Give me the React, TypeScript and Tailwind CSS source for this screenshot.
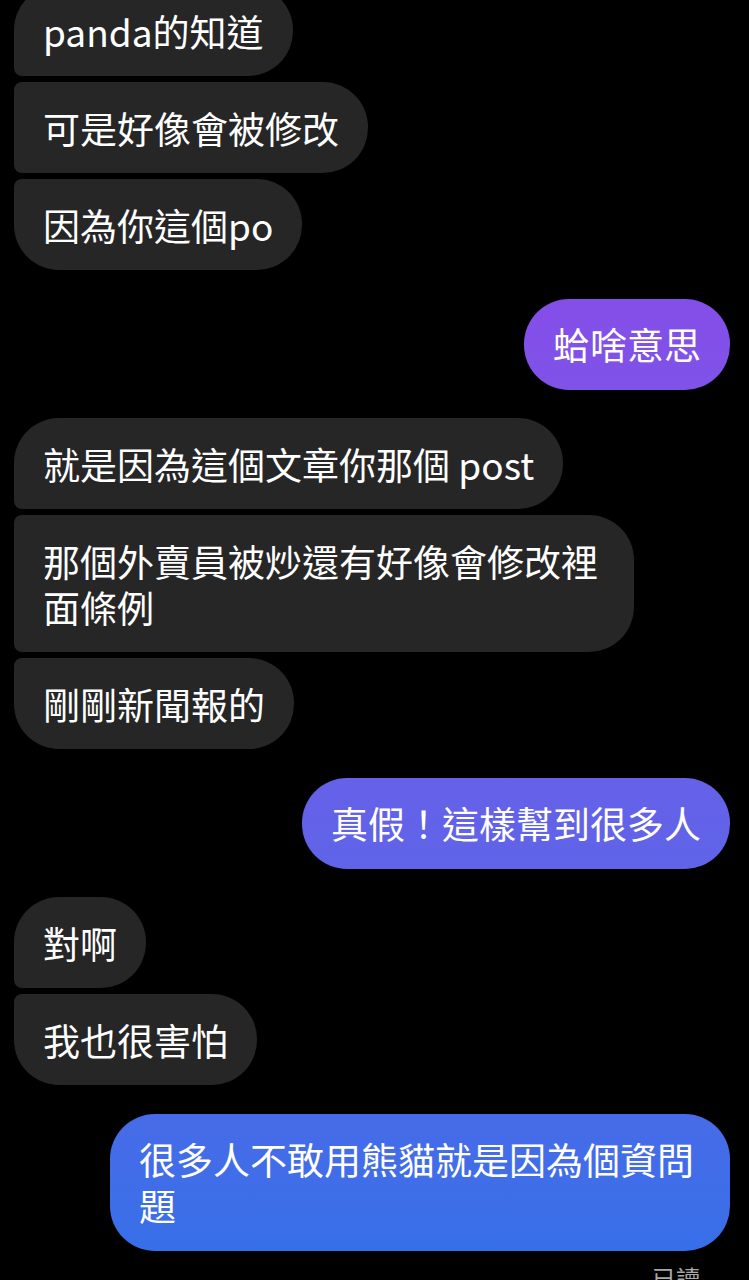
import React from "react";

type Msg = { text: string };
type Group = { side: "left" | "right"; messages: Msg[] };

const groups: Group[] = [
  {
    side: "left",
    messages: [
      { text: "panda的知道" },
      { text: "可是好像會被修改" },
      { text: "因為你這個po" },
    ],
  },
  { side: "right", messages: [{ text: "蛤啥意思" }] },
  {
    side: "left",
    messages: [
      { text: "就是因為這個文章你那個 post" },
      { text: "那個外賣員被炒還有好像會修改裡面條例" },
      { text: "剛剛新聞報的" },
    ],
  },
  { side: "right", messages: [{ text: "真假！這樣幫到很多人" }] },
  {
    side: "left",
    messages: [{ text: "對啊" }, { text: "我也很害怕" }],
  },
  { side: "right", messages: [{ text: "很多人不敢用熊貓就是因為個資問題" }] },
];

function leftCorners(i: number, n: number) {
  // first / middle / last bubble in a run of messages from the other person
  if (n === 1) return "rounded-[45px]";
  if (i === 0) return "rounded-tl-[45px] rounded-bl-[8px] rounded-r-[45px]";
  if (i === n - 1) return "rounded-tl-[8px] rounded-bl-[45px] rounded-r-[45px]";
  return "rounded-l-[8px] rounded-r-[45px]";
}

function Bubble({ text, side, corners }: { text: string; side: "left" | "right"; corners: string }) {
  return (
    <div
      className={`max-w-[620px] px-[29px] py-[22.5px] text-[37px] leading-[46px] text-white ${corners} ${
        side === "left"
          ? "bg-[#262626]"
          : "bg-linear-to-b from-[#943fe8] to-[#3270e8] bg-fixed"
      }`}
    >
      {text}
    </div>
  );
}

export default function App() {
  return (
    <div
      className="h-[1280px] overflow-hidden bg-black"
      style={{ fontFamily: '"Noto Sans CJK TC", "Noto Sans", sans-serif' }}
    >
      <div className="-mt-[15px] flex flex-col gap-[28.5px] pl-[14px] pr-[19px]">
        {groups.map((g, gi) => (
          <div
            key={gi}
            className={`flex flex-col gap-[6px] ${g.side === "left" ? "items-start" : "items-end"}`}
          >
            {g.messages.map((m, i) => (
              <Bubble
                key={i}
                text={m.text}
                side={g.side}
                corners={g.side === "left" ? leftCorners(i, g.messages.length) : "rounded-[45px]"}
              />
            ))}
          </div>
        ))}
        <p className="-mt-[17px] pr-[30px] text-right text-[24px] leading-[32px] text-[#a8a8a8]">已讀</p>
      </div>
    </div>
  );
}
